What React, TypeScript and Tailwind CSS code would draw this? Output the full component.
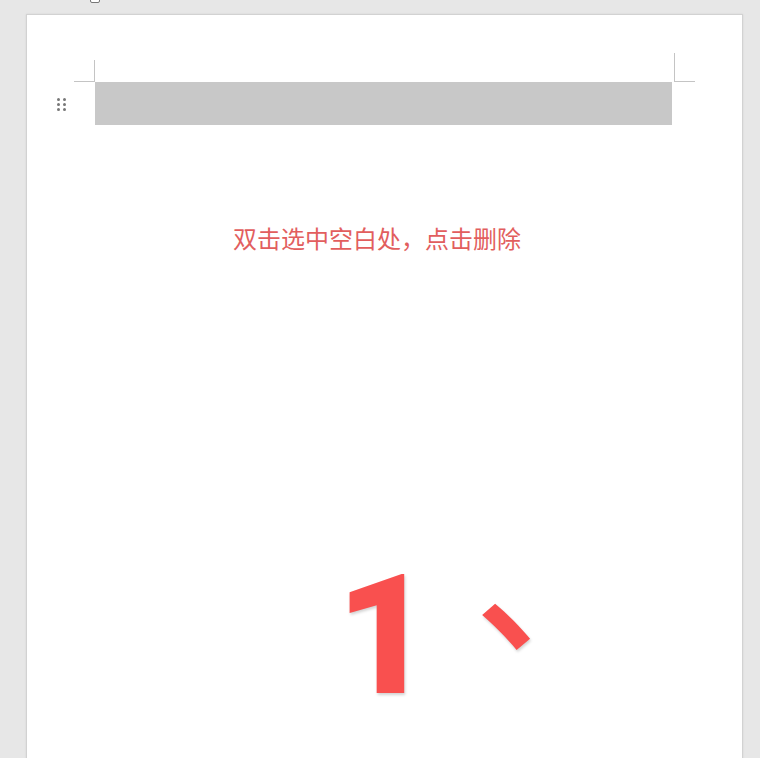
export default function App() {
  return (
    <div className="relative w-[760px] h-[758px] overflow-hidden bg-[#e7e7e7] pt-[14px] pl-[26px]">
      <div className="w-[717px] h-[760px] bg-white border border-[#d2d2d2] shadow-[0_0_2px_rgba(0,0,0,0.08)]">
        <div className="flex items-end h-[67px]">
          <div className="ml-[47px] w-[21px] h-[22px] border-r border-b border-[#c4c4c4]" />
          <div className="ml-[579px] w-[21px] h-[29px] border-l border-b border-[#c4c4c4]" />
        </div>
        <div className="flex">
          <div className="w-[68px] pl-[30px] pt-[16px]">
            <div className="grid grid-cols-2 w-[9px] gap-x-[3px] gap-y-[2px]">
              {Array.from({ length: 6 }).map((_, i) => (
                <div key={i} className="w-[3px] h-[3px] rounded-full bg-[#777]" />
              ))}
            </div>
          </div>
          <div className="w-[577px] h-[43px] bg-[#c8c8c8]" />
        </div>
        <div
          className="mt-[95px] pl-[206px] text-[24px] leading-[36px] text-[#e25e5e] whitespace-nowrap"
          style={{ fontFamily: '"Noto Sans CJK SC", sans-serif' }}
        >
          双击选中空白处，点击删除
        </div>
        <div className="mt-[297px] pl-[309px] flex items-start text-[#f9504f] [text-shadow:1px_2px_3px_rgba(0,0,0,0.18)]">
          <span
            className="text-[167px] leading-none font-black"
            style={{ fontFamily: 'Roboto, sans-serif' }}
          >
            1
          </span>
          <span
            className="ml-[42px] mt-[-60px] text-[158px] leading-none font-medium"
            style={{ fontFamily: '"Noto Sans CJK SC", sans-serif' }}
          >
            、
          </span>
        </div>
      </div>
      <div className="absolute left-[90px] top-[-6px] w-[10px] h-[9px] border border-[#777] rounded-[2px] bg-white" />
    </div>
  );
}
